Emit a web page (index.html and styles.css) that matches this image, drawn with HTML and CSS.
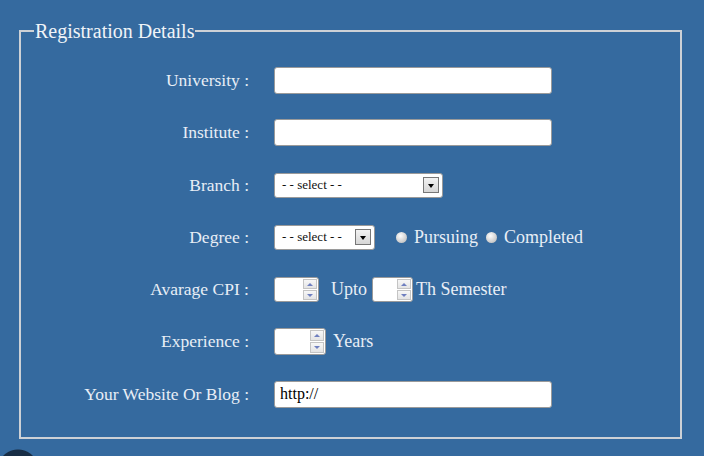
FILE: index.html
```html
<!DOCTYPE html>
<html lang="en">
<head>
    <meta charset="UTF-8">
    <title>Registration Details</title>
    <link rel="stylesheet" href="styles.css">
</head>
<body>
    <div class="page">
        <fieldset class="reg-box">
            <legend>Registration Details</legend>
            <div class="form-grid">
                <label class="lbl">University :</label>
                <div class="ctl"><input class="txt" type="text"></div>

                <label class="lbl">Institute :</label>
                <div class="ctl"><input class="txt" type="text"></div>

                <label class="lbl">Branch :</label>
                <div class="ctl">
                    <div class="sel sel-wide"><span>- - select - -</span><i class="sel-btn"></i></div>
                </div>

                <label class="lbl">Degree :</label>
                <div class="ctl">
                    <div class="sel sel-small"><span>- - select - -</span><i class="sel-btn"></i></div>
                    <span class="radio"></span><span class="opt">Pursuing</span>
                    <span class="radio"></span><span class="opt">Completed</span>
                </div>

                <label class="lbl">Avarage CPI :</label>
                <div class="ctl">
                    <div class="spin spin-cpi"><span class="spin-btns"><b class="up"></b><b class="down"></b></span></div>
                    <span class="word upto">Upto</span>
                    <div class="spin spin-sem"><span class="spin-btns"><b class="up"></b><b class="down"></b></span></div>
                    <span class="word">Th Semester</span>
                </div>

                <label class="lbl">Experience :</label>
                <div class="ctl">
                    <div class="spin spin-exp"><span class="spin-btns"><b class="up"></b><b class="down"></b></span></div>
                    <span class="word years">Years</span>
                </div>

                <label class="lbl">Your Website Or Blog :</label>
                <div class="ctl"><input class="txt" type="text" value="http://"></div>
            </div>
        </fieldset>
    </div>
    <div class="fab"></div>
</body>
</html>
```

FILE: styles.css
```css
* {
    box-sizing: border-box;
    margin: 0;
    padding: 0;
}

body {
    background: #356a9f;
    font-family: 'Liberation Serif', 'DejaVu Serif', serif;
    color: #e8eef6;
    overflow: hidden;
    height: 456px;
}

.page {
    padding: 21px 22px 0 19px;
}

.reg-box {
    border: 2px solid #cdd1d6;
    padding: 26px 0 29px 0;
    width: 663px;
}

.reg-box legend {
    font-size: 20px;
    padding: 0 1px;
    margin-left: 13px;
    color: #f0f4f8;
    line-height: 20px;
}

.form-grid {
    display: grid;
    grid-template-columns: 228px 1fr;
    grid-auto-rows: 27px;
    row-gap: 25.25px;
    column-gap: 25px;
    align-items: center;
}

.lbl {
    text-align: right;
    font-size: 17.5px;
}

.ctl {
    display: flex;
    align-items: center;
    height: 27px;
}

.txt {
    width: 278px;
    height: 27px;
    border: 1px solid #9a9a9a;
    border-radius: 3px;
    background: #fff;
    font-family: 'Liberation Serif', serif;
    font-size: 16px;
    padding: 0 5px;
    color: #000;
    outline: none;
}

.sel {
    height: 25px;
    background: #fff;
    border: 1px solid #9a9a9a;
    border-radius: 3px;
    display: flex;
    align-items: center;
    justify-content: space-between;
    padding: 0 3px 0 7px;
    font-size: 13px;
    color: #111;
}

.sel-wide { width: 169px; }
.sel-small { width: 101px; }

.sel-btn {
    width: 16px;
    height: 16px;
    border: 1px solid #777;
    background: linear-gradient(#f2f2f2, #d6d6d6);
    position: relative;
}

.sel-btn::after {
    content: "";
    position: absolute;
    left: 4px;
    top: 6px;
    border-left: 3px solid transparent;
    border-right: 3px solid transparent;
    border-top: 4px solid #000;
}

.radio {
    width: 11px;
    height: 11px;
    border-radius: 50%;
    background: radial-gradient(circle at 40% 35%, #fdfdfd, #c9c9c9 70%, #a8a8a8);
    margin-left: 21px;
    margin-right: 7px;
}

.opt + .radio {
    margin-left: 8px;
}

.opt, .word {
    font-size: 18px;
}

.spin {
    height: 25px;
    background: #fff;
    border: 1px solid #9a9a9a;
    border-radius: 3px;
    display: flex;
    justify-content: flex-end;
    padding: 1px;
}

.spin-cpi { width: 45px; }
.spin-sem { width: 41px; }
.spin-exp { width: 52px; height: 27px; }

.spin-btns {
    width: 14px;
    display: flex;
    flex-direction: column;
    gap: 1px;
}

.spin-btns b {
    flex: 1;
    border: 1px solid #c4c4c4;
    background: linear-gradient(#f7f7f7, #e4e4e4);
    position: relative;
}

.spin-btns b::after {
    content: "";
    position: absolute;
    left: 3px;
    top: 3px;
    border-left: 3px solid transparent;
    border-right: 3px solid transparent;
}

.spin-btns .up::after {
    border-bottom: 3px solid #6f7fbf;
}

.spin-btns .down::after {
    border-top: 3px solid #6f7fbf;
}

.upto {
    margin: 0 5px 0 12px;
}

.spin-sem + .word {
    margin-left: 3px;
}

.years {
    margin-left: 7px;
}

.fab {
    position: absolute;
    left: 0;
    top: 448px;
    width: 40px;
    height: 8px;
    background: radial-gradient(circle 21px at 18px 22px, #182d45 20px, transparent 21px);
}
```
